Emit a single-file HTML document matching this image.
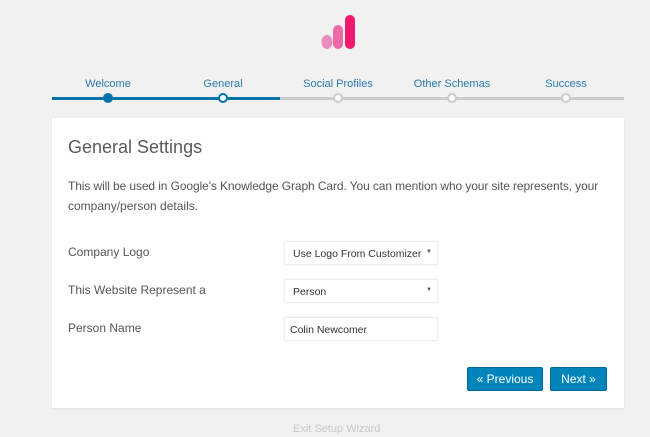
<!DOCTYPE html>
<html><head><style>
*{margin:0;padding:0;box-sizing:border-box}
body{width:650px;height:437px;background:#f1f1f1;font-family:"Liberation Sans",sans-serif;position:relative;overflow:hidden;color:#555}
.a{position:absolute;white-space:nowrap}
.step{font-size:11px;color:#2a7ab0;transform:translateX(-50%)}
.dot{position:absolute;width:10px;height:10px;border-radius:50%;top:93px;margin-left:-5px}
.card{position:absolute;left:52px;top:118px;width:572px;height:290px;background:#fff;box-shadow:0 1px 2px rgba(0,0,0,.08)}
.lbl{font-size:12px;color:#555}
.box{position:absolute;left:284px;width:154px;height:24px;background:#fff;border:1px solid #eee;box-shadow:0 0 2px rgba(0,0,0,.08);font-size:10.5px;color:#333;padding:6px 0 0 8px}
.arr{position:absolute;right:5px;top:7px;font-size:6px;color:#555}
.btn{position:absolute;top:367px;height:24px;background:#0085ba;border:1px solid #006799;border-radius:2px;color:#fff;font-size:12px;text-align:center;line-height:22px}
</style></head><body>
<svg class="a" style="left:318px;top:12px" width="40" height="40">
<ellipse cx="9" cy="30" rx="5.5" ry="7" fill="#e98dbd"/>
<rect x="15" y="13" width="10" height="24" rx="5" fill="#ec6aa8"/>
<rect x="27" y="3" width="10" height="34" rx="5" fill="#f0186d"/>
</svg>
<div class="a step" style="left:108px;top:78px">Welcome</div>
<div class="a step" style="left:223px;top:78px">General</div>
<div class="a step" style="left:338px;top:78px">Social Profiles</div>
<div class="a step" style="left:452px;top:78px">Other Schemas</div>
<div class="a step" style="left:566px;top:78px">Success</div>
<div class="a" style="left:52px;top:97px;width:572px;height:3px;background:#ccc"></div>
<div class="a" style="left:52px;top:97px;width:228px;height:3px;background:#0073aa"></div>
<div class="dot" style="left:108px;background:#0073aa"></div>
<div class="dot" style="left:223px;background:#fff;border:2px solid #0073aa"></div>
<div class="dot" style="left:338px;background:#fff;border:2px solid #ccc"></div>
<div class="dot" style="left:452px;background:#fff;border:2px solid #ccc"></div>
<div class="dot" style="left:566px;background:#fff;border:2px solid #ccc"></div>
<div class="card"></div>
<div class="a" style="left:68px;top:137px;font-size:18px;color:#5a5a5a">General Settings</div>
<div class="a" style="left:68px;top:179px;font-size:12px;color:#555;letter-spacing:-0.1px">This will be used in Google's Knowledge Graph Card. You can mention who your site represents, your</div>
<div class="a" style="left:68px;top:199px;font-size:12px;color:#555">company/person details.</div>
<div class="a lbl" style="left:68px;top:245px">Company Logo</div>
<div class="a lbl" style="left:68px;top:283px">This Website Represent a</div>
<div class="a lbl" style="left:68px;top:321px">Person Name</div>
<div class="box" style="top:241px">Use Logo From Customizer<span class="arr">▼</span></div>
<div class="box" style="top:279px">Person<span class="arr">▼</span></div>
<div class="box" style="top:317px;padding-left:5px">Colin Newcomer</div>
<div class="btn" style="left:467px;width:76px">« Previous</div>
<div class="btn" style="left:550px;width:57px">Next »</div>
<div class="a" style="left:293px;top:423px;font-size:11px;color:#c8c8c8">Exit Setup Wizard</div>
</body></html>
